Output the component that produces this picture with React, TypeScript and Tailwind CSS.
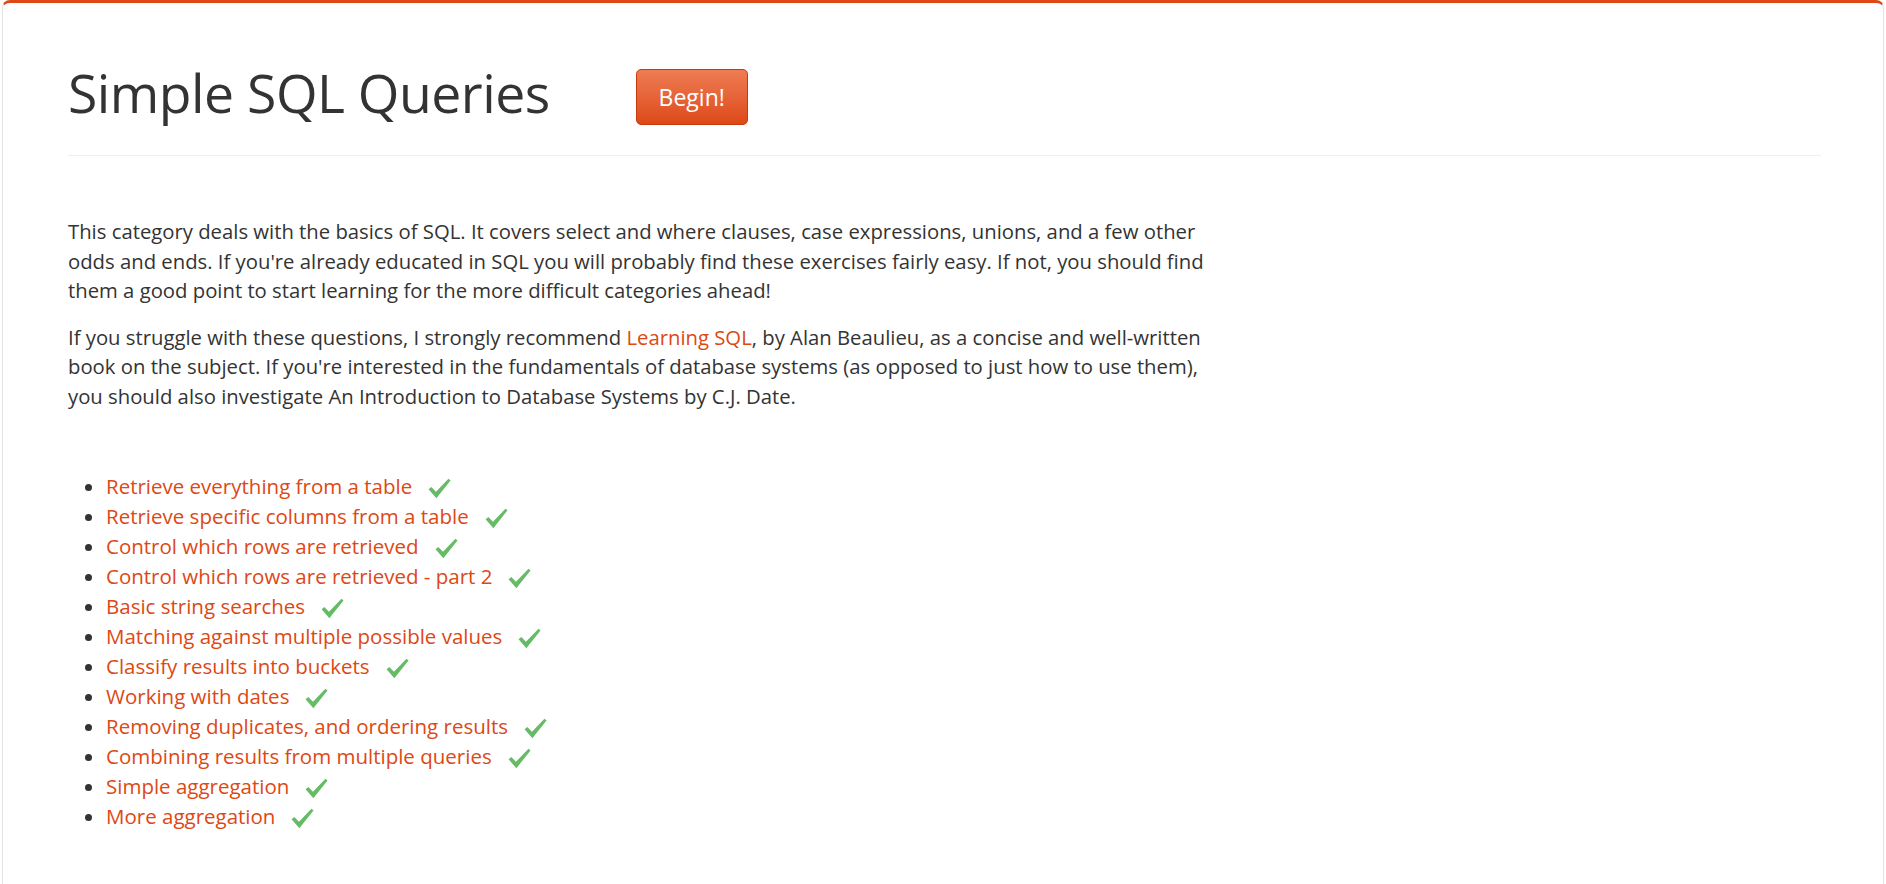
import React from "react";

const items = [
  "Retrieve everything from a table",
  "Retrieve specific columns from a table",
  "Control which rows are retrieved",
  "Control which rows are retrieved - part 2",
  "Basic string searches",
  "Matching against multiple possible values",
  "Classify results into buckets",
  "Working with dates",
  "Removing duplicates, and ordering results",
  "Combining results from multiple queries",
  "Simple aggregation",
  "More aggregation",
];

function Check() {
  return (
    <svg width="25" height="25" viewBox="0 0 24 24" className="ml-[15px] mt-[5px] shrink-0">
      <path d="M1.5 12.8 L4.2 10.6 L8.6 15.2 L20.6 2.6 L22.6 4.2 L9 21.4 Z" fill="#66bb66" />
    </svg>
  );
}

export default function App() {
  return (
    <div className="min-h-[884px] bg-white px-[2px]" style={{ fontFamily: '"Open Sans", "Noto Sans", sans-serif' }}>
      <div className="min-h-[884px] rounded-t-[8px] border-t-[3px] border-x border-t-[#dd4814] border-x-[#e3e3e3] bg-white pl-[65px] pr-[62px]">
        <div className="flex items-start pt-[62px] pb-[30px] border-b border-[#eeeeee]">
          <h1 className="text-[53.5px] font-normal leading-[56px] text-[#333333] tracking-[-0.5px]">Simple SQL Queries</h1>
          <button className="ml-[86px] mt-[4px] h-[56px] w-[112px] rounded-[5px] border border-[#c43c0d] bg-gradient-to-b from-[#ef7c52] to-[#dd4814] text-[23px] text-white">
            Begin!
          </button>
        </div>
        <div className="pt-[61px] text-[20.3px] leading-[29.5px] text-[#333333]">
          <p>
            This category deals with the basics of SQL. It covers select and where clauses, case expressions, unions, and a few other
            <br />
            odds and ends. If you're already educated in SQL you will probably find these exercises fairly easy. If not, you should find
            <br />
            them a good point to start learning for the more difficult categories ahead!
          </p>
          <p className="mt-[17px]">
            If you struggle with these questions, I strongly recommend <span className="text-[#dd4814]">Learning SQL</span>, by Alan Beaulieu, as a concise and well-written
            <br />
            book on the subject. If you're interested in the fundamentals of database systems (as opposed to just how to use them),
            <br />
            you should also investigate An Introduction to Database Systems by C.J. Date.
          </p>
          <ul className="mt-[60px] list-disc pl-[38px] marker:text-[#333333] text-[20.5px]">
            {items.map((t) => (
              <li key={t} className="leading-[30px]">
                <span className="inline-flex items-start align-top">
                  <span className="text-[#dd4814]">{t}</span>
                  <Check />
                </span>
              </li>
            ))}
          </ul>
        </div>
      </div>
    </div>
  );
}
